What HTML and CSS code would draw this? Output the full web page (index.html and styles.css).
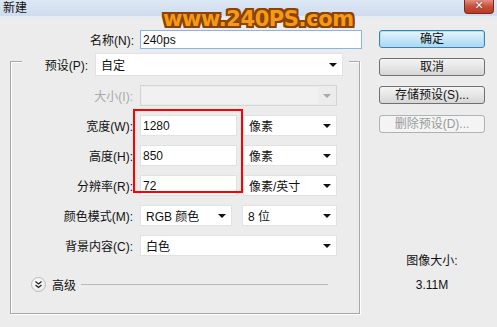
FILE: index.html
```html
<!doctype html>
<html lang="zh-CN">
  <head>
    <meta charset="utf-8" />
    <title>新建</title>
    <link rel="stylesheet" href="styles.css">
  </head>
  <body>
	<div class="window">
		<div class="titlebar">
			<span class="title">新建</span>
			<span class="close">✕</span>
		</div>
		<div class="content">
			<div class="left">
				<div class="row name-row">
					<label>名称(N):</label>
					<div class="field input name-field">240ps</div>
				</div>
				<div class="group">
					<div class="row preset-row">
						<label>预设(P):</label>
						<div class="field select preset-field">自定<span class="arrow"></span></div>
					</div>
					<div class="row">
						<label class="disabled">大小(I):</label>
						<div class="field select off size-field"><span class="inner"></span><span class="arrow"></span></div>
					</div>
					<div class="row">
						<label>宽度(W):</label>
						<div class="field input num">1280</div>
						<div class="field select unit">像素<span class="arrow"></span></div>
					</div>
					<div class="row">
						<label>高度(H):</label>
						<div class="field input num">850</div>
						<div class="field select unit">像素<span class="arrow"></span></div>
					</div>
					<div class="row">
						<label>分辨率(R):</label>
						<div class="field input num">72</div>
						<div class="field select unit">像素/英寸<span class="arrow"></span></div>
					</div>
					<div class="row">
						<label>颜色模式(M):</label>
						<div class="field select mode">RGB 颜色<span class="arrow"></span></div>
						<div class="field select depth">8 位<span class="arrow"></span></div>
					</div>
					<div class="row">
						<label>背景内容(C):</label>
						<div class="field select bg-field">白色<span class="arrow"></span></div>
					</div>
					<div class="advanced">
						<span class="expander">
							<svg width="9" height="9" viewBox="0 0 9 9"><path d="M1.5 1.5 L4.5 4 L7.5 1.5 M1.5 5 L4.5 7.5 L7.5 5" fill="none" stroke="#222" stroke-width="1.3"/></svg>
						</span>
						<span class="adv-label">高级</span>
						<span class="adv-line"></span>
					</div>
				</div>
			</div>
			<div class="right">
				<div class="btn primary">确定</div>
				<div class="btn">取消</div>
				<div class="btn">存储预设(S)...</div>
				<div class="btn disabled">删除预设(D)...</div>
				<div class="image-size">
					<div>图像大小:</div>
					<div class="size-value">3.11M</div>
				</div>
			</div>
		</div>
		<div class="highlight"></div>
		<div class="watermark">www.240PS.com</div>
	</div>
  </body>
</html>
```

FILE: styles.css
```css
* {
	box-sizing: border-box;
	font-family: "Liberation Sans", "Noto Sans CJK SC", sans-serif;
	font-size: 12px;
}

body {
	margin: 0;
	background: #ececec;
}

.window {
	position: relative;
	width: 497px;
	height: 327px;
	background: #ececec;
	color: #111;
	overflow: hidden;
}

.titlebar {
	height: 18px;
	background: linear-gradient(#dde8f5, #cfdcee);
	border-bottom: 2px solid #e6ecf3;
	display: flex;
	align-items: center;
	padding-left: 3px;
}

.title {
	flex: 1;
	line-height: 16px;
}

.close {
	width: 30px;
	height: 16px;
	margin: -2px 3px 0 0;
	align-self: flex-start;
	background: linear-gradient(#e9a598, #c9503c 55%, #b93a26);
	border: 1px solid #7a2a1d;
	border-top: none;
	border-radius: 0 0 4px 4px;
	color: #fff;
	font-family: "DejaVu Sans", sans-serif;
	font-size: 11px;
	font-weight: bold;
	text-align: center;
	line-height: 15px;
	text-shadow: 0 0 2px #5a1a10;
}

.content {
	display: flex;
	padding-top: 12px;
}

.left {
	width: 370px;
}

.row {
	display: flex;
	align-items: center;
	height: 21px;
	margin-top: 9px;
}

.row label {
	width: 129px;
	padding-right: 7px;
	text-align: right;
	white-space: nowrap;
}

label.disabled {
	color: #a9a9a9;
}

.name-row {
	height: 19px;
	margin-top: 0;
}

.name-row label {
	width: 140px;
	padding-right: 6px;
}

.field {
	position: relative;
	height: 100%;
	background: #fff;
	border: 1px solid #e2e2e2;
	display: flex;
	align-items: center;
	white-space: nowrap;
}

.input {
	padding-left: 2px;
}

.select {
	padding-left: 5px;
}

.name-field {
	width: 222px;
	border-color: #86b6e6;
}

.arrow {
	position: absolute;
	right: 5px;
	top: 50%;
	margin-top: -2px;
	border-left: 4px solid transparent;
	border-right: 4px solid transparent;
	border-top: 4px solid #111;
}

.group {
	margin: 12px 0 0 10px;
	width: 350px;
	height: 253px;
	border: 1px solid #a8a8a8;
	box-shadow: 1px 1px 0 #fff, inset 1px 1px 0 #fff;
}

.preset-row {
	height: 23px;
	margin: -9px 0 0 11px;
	width: 327px;
	background: #ececec;
}

.preset-row label {
	width: 73px;
	padding-right: 7px;
}

.preset-field {
	width: 248px;
}

.size-field {
	width: 197px;
	background: #ececec;
	border-color: #d5d5d5;
	padding: 1px;
}

.size-field .inner {
	width: 176px;
	height: 100%;
	background: #f1f1f1;
}

.size-field .arrow {
	border-top-color: #a8a8a8;
}

.num {
	width: 97px;
}

.unit {
	width: 94px;
	margin-left: 6px;
}

.mode {
	width: 92px;
}

.depth {
	width: 95px;
	margin-left: 10px;
}

.bg-field {
	width: 197px;
}

.advanced {
	display: flex;
	align-items: center;
	height: 16px;
	margin: 20px 0 0 20px;
}

.expander {
	width: 15px;
	height: 15px;
	border-radius: 50%;
	border: 1px solid #bdbdbd;
	background: radial-gradient(circle at 40% 35%, #fff, #e3e3e3);
	display: flex;
	align-items: center;
	justify-content: center;
}

.adv-label {
	margin-left: 6px;
}

.adv-line {
	width: 247px;
	height: 1px;
	margin-left: 5px;
	background: #b9b9b9;
}

.right {
	width: 106px;
	margin-left: 9px;
	display: flex;
	flex-direction: column;
	gap: 10px;
}

.btn {
	height: 18px;
	border: 1px solid #707070;
	border-radius: 3px;
	background: linear-gradient(#f4f4f4, #e6e6e6 50%, #d6d6d6);
	text-align: center;
	line-height: 16px;
}

.btn.primary {
	border-color: #3c7fb1;
	background: linear-gradient(#e8f5fc, #c6e6f8 50%, #a7d8f4);
	box-shadow: inset 0 0 0 1px #a6e2fa;
}

.btn.disabled {
	margin-top: 1px;
	color: #9a9a9a;
	border-color: #adb2b5;
	background: #f4f4f4;
}

.image-size {
	margin-top: 106px;
	text-align: center;
	line-height: 24px;
}

.highlight {
	position: absolute;
	left: 133px;
	top: 109px;
	width: 110px;
	height: 84px;
	border: 2px solid #f00;
}

.watermark {
	position: absolute;
	left: 163px;
	top: 8px;
	font-family: "DejaVu Sans", sans-serif;
	font-size: 21px;
	font-weight: bold;
	letter-spacing: -0.4px;
	line-height: 22px;
	color: #f59a16;
	text-shadow: 2px 0 0 #8a4300, -2px 0 0 #8a4300, 0 2px 0 #8a4300, 0 -2px 0 #8a4300,
		1px 1px 0 #8a4300, -1px -1px 0 #8a4300, 1px -1px 0 #8a4300, -1px 1px 0 #8a4300,
		2px 2px 0 #8a4300, -2px 2px 0 #8a4300, 2px -2px 0 #8a4300, -2px -2px 0 #8a4300;
}
```
